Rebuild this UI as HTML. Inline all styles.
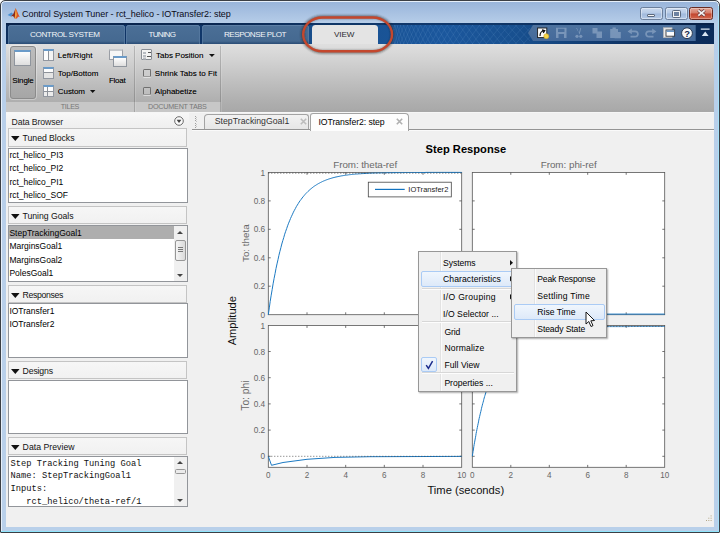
<!DOCTYPE html>
<html><head><meta charset="utf-8"><title>Control System Tuner</title>
<style>
*{box-sizing:border-box;margin:0;padding:0}
html,body{width:720px;height:533px;overflow:hidden}
body{position:relative;background:#b6cde8;font-family:"Liberation Sans",sans-serif;font-size:9px;color:#000}
.a{position:absolute}
.t{position:absolute;white-space:nowrap;line-height:1}
svg{position:absolute;overflow:visible}
</style></head><body>
<div class="a" style="left:0;top:0;width:720px;height:533px;background:#fff"></div>
<div class="a" style="left:0;top:0;width:720px;height:533px;border:1px solid #3b3f45;border-radius:5px 5px 1px 1px;background:linear-gradient(#98b4da 0,#a4bee0 9px,#b6cde8 22px,#b8cfea 60px,#b9d0ea 100%);box-shadow:inset 0 0 0 1px #e6effa"></div>
<div class="a" style="left:718px;top:6px;width:1px;height:526px;background:#a6e2fa"></div>
<div class="a" style="left:1px;top:531px;width:718px;height:1px;background:#8fe4fb"></div>
<svg style="left:7.3px;top:7px" width="13.5" height="12.5" viewBox="0 0 14 13">
<path d="M0.6 8.2 L4.6 5.6 L6.4 7.4 L3.9 10 Z" fill="#4a90d2"/>
<path d="M3.9 10 L6.4 7.4 C7.4 5.5 8 3 8.9 1.2 L9.6 4 L8.2 12 L6.2 9.4 Z" fill="#8b2b1c"/>
<path d="M8.9 1.2 C10.4 3.2 11.4 7.2 13.4 10.6 C12 10 11.2 9.8 10.4 12 L8 12 C8.5 8 8.7 4 8.9 1.2Z" fill="#d9542a"/>
<path d="M8.9 1.2 C9.7 3.4 10 5.4 10.2 8.4 L9 12 L7.9 12 C8.4 8 8.7 4 8.9 1.2Z" fill="#f4a53f"/>
</svg>
<div class="t" style="left:22.00px;top:9.80px;font-size:9.00px;color:#0a0a18;letter-spacing:-0.047px;">Control System Tuner - rct_helico - IOTransfer2: step</div>
<div class="a" style="left:640px;top:7px;width:23px;height:13px;border:1px solid #6b7f9c;border-radius:2.5px;background:linear-gradient(#cbdaee,#b6cae6 47%,#a0b9dc 53%,#b4c9e6);box-shadow:inset 0 0 0 1px rgba(255,255,255,.4)"></div>
<div class="a" style="left:665px;top:7px;width:23px;height:13px;border:1px solid #6b7f9c;border-radius:2.5px;background:linear-gradient(#cbdaee,#b6cae6 47%,#a0b9dc 53%,#b4c9e6);box-shadow:inset 0 0 0 1px rgba(255,255,255,.4)"></div>
<div class="a" style="left:689px;top:7px;width:24px;height:13px;border:1px solid #6a2b22;border-radius:2.5px;background:linear-gradient(#e2a899,#d47a66 47%,#c2452e 53%,#d2684e);box-shadow:inset 0 0 0 1px rgba(255,255,255,.3)"></div>
<div class="a" style="left:647.3px;top:13.6px;width:7.8px;height:3.4px;background:#f4f4f4;border:0.8px solid #5b697e;border-radius:1px"></div>
<div class="a" style="left:673px;top:11px;width:7px;height:5.6px;background:#6d82a1;border:1.7px solid #f4f4f4;outline:0.8px solid #5b697e;border-radius:0.5px"></div>
<svg style="left:695.5px;top:9.3px" width="11" height="8" viewBox="0 0 11 8"><path d="M2.3 1.3 L8.7 6.7 M8.7 1.3 L2.3 6.7" stroke="#6b4040" stroke-width="3.1"/><path d="M2.3 1.3 L8.7 6.7 M8.7 1.3 L2.3 6.7" stroke="#f4f4f4" stroke-width="1.7"/></svg>
<div class="a" style="left:6px;top:22.5px;width:708px;height:21.5px;background:linear-gradient(90deg,#0d2f5e 0,#10376a 30%,#18508f 45%,#1b579d 62%,#18508f 72%,#0e3364 88%,#0b2b59 100%)"></div>
<div class="a" style="left:6px;top:22.5px;width:708px;height:2px;background:rgba(4,20,50,.45)"></div>
<svg style="left:0;top:0" width="720" height="50" viewBox="0 0 720 50"><clipPath id="mc"><rect x="378" y="25" width="152" height="19"/></clipPath><path clip-path="url(#mc)" d="M389.5 25L394.5 44M389.5 44L394.5 25M390.3 25L395.8 44M390.3 44L395.8 25M392.0 25L398.0 44M392.0 44L398.0 25M394.2 25L400.7 44M394.2 44L400.7 25M396.9 25L403.9 44M396.9 44L403.9 25M400.1 25L407.6 44M400.1 44L407.6 25M403.5 25L411.5 44M403.5 44L411.5 25M407.3 25L415.8 44M407.3 44L415.8 25M411.4 25L420.4 44M411.4 44L420.4 25M415.8 25L425.3 44M415.8 44L425.3 25M420.4 25L430.4 44M420.4 44L430.4 25M425.3 25L435.8 44M425.3 44L435.8 25M430.4 25L441.4 44M430.4 44L441.4 25M435.7 25L447.2 44M435.7 44L447.2 25M441.3 25L453.3 44M441.3 44L453.3 25M447.1 25L459.6 44M447.1 44L459.6 25M453.1 25L466.1 44M453.1 44L466.1 25M459.3 25L472.8 44M459.3 44L472.8 25M465.6 25L479.6 44M465.6 44L479.6 25M472.2 25L486.7 44M472.2 44L486.7 25M479.0 25L494.0 44M479.0 44L494.0 25M485.9 25L501.4 44M485.9 44L501.4 25M493.0 25L509.0 44M493.0 44L509.0 25M500.2 25L516.7 44M500.2 44L516.7 25M507.7 25L524.7 44M507.7 44L524.7 25M515.3 25L532.8 44M515.3 44L532.8 25M523.0 25L541.0 44M523.0 44L541.0 25" fill="none" stroke="#7ba5d8" stroke-width="0.5" opacity=".3"/></svg>
<svg style="left:528px;top:24.8px" width="168" height="16" viewBox="0 0 168 16"><defs><linearGradient id="qg" x1="0" y1="0" x2="0" y2="1"><stop offset="0" stop-color="#4d729e"/><stop offset="1" stop-color="#44699a"/></linearGradient></defs><path d="M0 8 L5 0 H167.7 V16 H5 Z" fill="url(#qg)"/></svg>
<svg style="left:528px;top:24px" width="186" height="18" viewBox="528 24 186 18">
<rect x="537.6" y="28" width="9.2" height="9.6" fill="#fbfbfb" stroke="#1a1a1a" stroke-width="0.9"/>
<path d="M540 36 C540 32.5 541.5 31 544 31 M542 29.8 L544.8 30.6 L543.2 33" fill="none" stroke="#111" stroke-width="1.2"/>
<circle cx="546.3" cy="36.2" r="2.5" fill="#f7d64a" stroke="#c9a227" stroke-width="0.6"/>
<g fill="#a9bdd6" opacity=".5">
 <path d="M556 27.8 H566.5 V38 H556 Z M558 28.8 V32 H564.5 V28.8 Z M558.5 34 V38 H564 V34 Z" fill-rule="evenodd"/>
 <path d="M576.2 28 L579.6 34.5 L581.2 28 L580.4 28 L578.9 33 L577 28 Z"/>
 <circle cx="577" cy="36.3" r="1.6"/><circle cx="580.8" cy="36.3" r="1.6"/>
 <path d="M592.5 28 H597.5 V33.5 H592.5 Z M596.5 31.5 H602 V38 H596.5 Z"/>
 <path d="M610.2 29 H618 V38 H610.2 Z M612.5 27.6 H615.8 V29.6 H612.5 Z M614.5 32 H620.8 V38.2 H614.5 Z"/>
 <path d="M627.6 31.5 L631.8 28.6 V30.4 H635 C637.6 30.4 638.8 32 638.8 34 C638.8 36 637.6 37.4 635 37.4 H630.5 V35.8 H635 C636.4 35.8 637 35 637 34 C637 33 636.4 32.2 635 32.2 H631.8 V34.2 Z"/>
 <path d="M656.4 31.5 L652.2 28.6 V30.4 H649 C646.4 30.4 645.2 32 645.2 34 C645.2 36 646.4 37.4 649 37.4 H653.5 V35.8 H649 C647.6 35.8 647 35 647 34 C647 33 647.6 32.2 649 32.2 H652.2 V34.2 Z"/>
</g>
<rect x="663.6" y="27.8" width="8.4" height="9.6" fill="#e9e9e9" stroke="#b9b9b9" stroke-width="0.8"/>
<rect x="666" y="30" width="8.6" height="6.2" fill="#fdfdfd" stroke="#33373d" stroke-width="0.9"/>
<rect x="666.4" y="30.4" width="7.8" height="1.5" fill="#5d8ec2"/>
<circle cx="687" cy="33.2" r="5.4" fill="#f8f8f8" stroke="#2a3a52" stroke-width="1"/>
<text x="687" y="36.6" font-family="Liberation Sans, sans-serif" font-weight="bold" font-size="9.4" fill="#14284e" text-anchor="middle">?</text>
<path d="M700.8 28.4 H709.6 V29.7 H700.8 Z M701.8 36 L705.2 31.6 L708.6 36 Z" fill="#d9e5f2"/>
</svg>
<div class="a" style="left:8px;top:25px;width:116.6px;height:18.8px;border-radius:3.5px 3.5px 0 0;background:linear-gradient(#4b6f97 0,#456990 85%,#2e517a 96%);box-shadow:inset 0 0.8px 0 #6485aa,inset 0.8px 0 0 #587ba2,inset -0.8px 0 0 #587ba2"></div>
<div class="a" style="left:126.3px;top:25px;width:74px;height:18.8px;border-radius:3.5px 3.5px 0 0;background:linear-gradient(#4b6f97 0,#456990 85%,#2e517a 96%);box-shadow:inset 0 0.8px 0 #6485aa,inset 0.8px 0 0 #587ba2,inset -0.8px 0 0 #587ba2"></div>
<div class="a" style="left:202.3px;top:25px;width:107px;height:18.8px;border-radius:3.5px 3.5px 0 0;background:linear-gradient(#4b6f97 0,#456990 85%,#2e517a 96%);box-shadow:inset 0 0.8px 0 #6485aa,inset 0.8px 0 0 #587ba2,inset -0.8px 0 0 #587ba2"></div>
<div class="a" style="left:312px;top:25px;width:65.8px;height:19px;border-radius:3.5px 3.5px 0 0;background:#e4e4e4"></div>
<div class="t" style="left:30.00px;top:30.95px;font-size:8.10px;color:#f2f5f8;letter-spacing:-0.374px;">CONTROL SYSTEM</div>
<div class="t" style="left:148.50px;top:30.95px;font-size:8.10px;color:#f2f5f8;letter-spacing:-0.710px;">TUNING</div>
<div class="t" style="left:224.00px;top:30.95px;font-size:8.10px;color:#f2f5f8;letter-spacing:-0.493px;">RESPONSE PLOT</div>
<div class="t" style="left:334.00px;top:30.95px;font-size:8.10px;color:#2a2a30;letter-spacing:-0.067px;">VIEW</div>
<div class="a" style="left:6px;top:44px;width:708px;height:69px;background:linear-gradient(#dfdfdf 0,#d3d3d3 22%,#bfbfbf 55%,#aeaeae 85%,#a7a7a7 100%)"></div>
<div class="a" style="left:6px;top:102px;width:214.5px;height:10.5px;background:#c7c7c7"></div>
<div class="a" style="left:6px;top:112.3px;width:708px;height:1px;background:#f6f6f6"></div>
<div class="a" style="left:134px;top:46px;width:1px;height:66px;background:rgba(0,0,0,.17);box-shadow:1px 0 0 rgba(255,255,255,.14)"></div>
<div class="a" style="left:220px;top:46px;width:1px;height:66px;background:rgba(0,0,0,.17);box-shadow:1px 0 0 rgba(255,255,255,.14)"></div>
<div class="t" style="left:60.80px;top:103.40px;font-size:7.20px;color:#777;letter-spacing:-0.352px;">TILES</div>
<div class="t" style="left:148.00px;top:103.40px;font-size:7.20px;color:#777;letter-spacing:-0.218px;">DOCUMENT TABS</div>
<div class="a" style="left:10px;top:46.3px;width:25.6px;height:53px;border:1px solid #8b8b8b;border-radius:3px;background:linear-gradient(#bdbdbd,#a6a6a6);box-shadow:0 0 0 1px rgba(255,255,255,.3)"></div>
<div class="a" style="left:13.5px;top:50px;width:17.2px;height:15.8px;border:1px solid #8f959d;border-top:2px solid #6a9bc9;background:linear-gradient(#fefefe,#dedede)"></div>
<div class="t" style="left:12.30px;top:76.80px;font-size:8.00px;color:#000;letter-spacing:-0.148px;text-shadow:0 0 0.4px rgba(0,0,0,.35);">Single</div>
<div class="a" style="left:43px;top:49px;width:11px;height:12px;border:1px solid #9297a0;border-top:2px solid #6a9bc9;background:linear-gradient(90deg,#fdfdfd 4px,#8d9299 4px,#8d9299 5px,#f4f4f4 5px)"></div>
<div class="a" style="left:43px;top:67px;width:11px;height:12px;border:1px solid #9297a0;border-top:2px solid #6a9bc9;background:linear-gradient(#fdfdfd 3.5px,#8d9299 3.5px,#8d9299 4.5px,#e4e4e4 4.5px)"></div>
<div class="a" style="left:43px;top:85px;width:11px;height:12px;border:1px solid #9297a0;border-top:2px solid #6a9bc9;background:linear-gradient(90deg,transparent 3.5px,#8d9299 3.5px,#8d9299 4.5px,transparent 4.5px),linear-gradient(#fdfdfd 3.5px,#8d9299 3.5px,#8d9299 4.5px,#ececec 4.5px)"></div>
<div class="t" style="left:57.80px;top:51.50px;font-size:8.00px;color:#000;letter-spacing:0.040px;text-shadow:0 0 0.4px rgba(0,0,0,.35);">Left/Right</div>
<div class="t" style="left:57.80px;top:69.60px;font-size:8.00px;color:#000;letter-spacing:0.015px;text-shadow:0 0 0.4px rgba(0,0,0,.35);">Top/Bottom</div>
<div class="t" style="left:57.80px;top:87.70px;font-size:8.00px;color:#000;letter-spacing:-0.073px;text-shadow:0 0 0.4px rgba(0,0,0,.35);">Custom</div>
<svg style="left:89.6px;top:90px" width="5.4" height="3" viewBox="0 0 5.4 3"><path d="M0 0H5.4L2.7 3Z" fill="#111"/></svg>
<div class="a" style="left:109px;top:49.4px;width:14px;height:11px;border:1px solid #9a9ea5;border-top:2px solid #c6c9cd;background:#f6f6f6"></div>
<div class="a" style="left:112.5px;top:55.5px;width:14px;height:11.5px;border:1px solid #8f959d;border-top:2px solid #6a9bc9;background:linear-gradient(#fefefe,#dedede)"></div>
<div class="t" style="left:108.90px;top:76.80px;font-size:8.00px;color:#000;letter-spacing:-0.221px;text-shadow:0 0 0.4px rgba(0,0,0,.35);">Float</div>
<div class="a" style="left:141.2px;top:49.4px;width:11.2px;height:10.2px;border:1px solid #8a8f96;background:#f3f3f3;border-radius:1px"></div>
<div class="a" style="left:143px;top:51.5px;width:3px;height:2px;background:#b8bcc2;box-shadow:0 3px 0 #b8bcc2,0 5.5px 0 #b8bcc2"></div>
<div class="a" style="left:147.5px;top:52px;width:3px;height:1px;background:#555;box-shadow:-1px 4px 0 #555,0 4px 0 #555"></div>
<div class="t" style="left:156.00px;top:51.50px;font-size:8.00px;color:#000;letter-spacing:-0.007px;text-shadow:0 0 0.4px rgba(0,0,0,.35);">Tabs Position</div>
<svg style="left:208.6px;top:53.6px" width="5.8" height="3.1" viewBox="0 0 5.8 3.1"><path d="M0 0H5.8L2.9 3.1Z" fill="#111"/></svg>
<div class="a" style="left:143px;top:69.4px;width:7.8px;height:7.6px;border:1px solid #6f6f6f;border-bottom-color:#9a9a9a;border-radius:1.5px;background:rgba(255,255,255,.12);box-shadow:0 1px 0 rgba(255,255,255,.5)"></div>
<div class="a" style="left:143px;top:87.3px;width:7.8px;height:7.6px;border:1px solid #6f6f6f;border-bottom-color:#9a9a9a;border-radius:1.5px;background:rgba(255,255,255,.12);box-shadow:0 1px 0 rgba(255,255,255,.5)"></div>
<div class="t" style="left:154.80px;top:69.60px;font-size:8.00px;color:#000;letter-spacing:0.032px;text-shadow:0 0 0.4px rgba(0,0,0,.35);">Shrink Tabs to Fit</div>
<div class="t" style="left:154.80px;top:87.70px;font-size:8.00px;color:#000;letter-spacing:0.019px;text-shadow:0 0 0.4px rgba(0,0,0,.35);">Alphabetize</div>
<div class="a" style="left:6px;top:113.3px;width:708px;height:413.7px;background:#f0f0f0"></div>
<div class="a" style="left:6px;top:113.3px;width:183px;height:15.5px;background:linear-gradient(#f7f7f7,#eeeeee)"></div>
<div class="t" style="left:11.60px;top:118.05px;font-size:8.70px;color:#1a1a1a;letter-spacing:-0.100px;">Data Browser</div>
<svg style="left:173.5px;top:116.3px" width="10" height="10" viewBox="0 0 10 10"><circle cx="5" cy="5" r="4.3" fill="#fafafa" stroke="#5a5a5a" stroke-width="0.9"/><path d="M2.6 3.7 L7.4 3.7 L5 7Z" fill="#444"/></svg>
<div class="a" style="left:7.5px;top:128px;width:179.5px;height:19px;border:1px solid #c4c4c4;background:linear-gradient(#f6f6f6,#f1f1f1)"></div>
<svg style="left:10.5px;top:136.2px" width="8.6" height="4.9" viewBox="0 0 8.6 4.9"><path d="M0 0H8.6L4.3 4.9Z" fill="#111"/></svg>
<div class="t" style="left:22.60px;top:133.85px;font-size:8.70px;color:#111;letter-spacing:-0.035px;">Tuned Blocks</div>
<div class="a" style="left:7.5px;top:148px;width:180.3px;height:55px;border:1px solid #92959a;background:#fff"></div>
<div class="t" style="left:9.40px;top:150.75px;font-size:8.50px;color:#000;">rct_helico_PI3</div>
<div class="t" style="left:9.40px;top:164.15px;font-size:8.50px;color:#000;">rct_helico_PI2</div>
<div class="t" style="left:9.40px;top:177.55px;font-size:8.50px;color:#000;">rct_helico_PI1</div>
<div class="t" style="left:9.40px;top:190.95px;font-size:8.50px;color:#000;">rct_helico_SOF</div>
<div class="a" style="left:7.5px;top:206px;width:179.5px;height:18px;border:1px solid #c4c4c4;background:linear-gradient(#f6f6f6,#f1f1f1)"></div>
<svg style="left:10.5px;top:214.2px" width="8.6" height="4.9" viewBox="0 0 8.6 4.9"><path d="M0 0H8.6L4.3 4.9Z" fill="#111"/></svg>
<div class="t" style="left:22.60px;top:211.85px;font-size:8.70px;color:#111;letter-spacing:-0.039px;">Tuning Goals</div>
<div class="a" style="left:7.5px;top:225px;width:180.3px;height:57px;border:1px solid #92959a;background:#fff"></div>
<div class="a" style="left:8.5px;top:226px;width:165px;height:13.4px;background:#aeaeae"></div>
<div class="t" style="left:9.40px;top:228.75px;font-size:8.50px;color:#000;">StepTrackingGoal1</div>
<div class="t" style="left:9.40px;top:242.15px;font-size:8.50px;color:#000;">MarginsGoal1</div>
<div class="t" style="left:9.40px;top:255.55px;font-size:8.50px;color:#000;">MarginsGoal2</div>
<div class="t" style="left:9.40px;top:268.95px;font-size:8.50px;color:#000;">PolesGoal1</div>
<div class="a" style="left:173.8px;top:226px;width:13px;height:55px;background:#f0f0f0"></div>
<svg style="left:177.3px;top:231px" width="6" height="3" viewBox="0 0 6 3"><path d="M0 3H6L3 0Z" fill="#444"/></svg>
<svg style="left:177.3px;top:273.5px" width="6" height="3" viewBox="0 0 6 3"><path d="M0 0H6L3 3Z" fill="#444"/></svg>
<div class="a" style="left:174.8px;top:239.5px;width:11px;height:21px;border:1px solid #979797;border-radius:2px;background:linear-gradient(90deg,#f5f5f5,#dadada)"></div>
<div class="a" style="left:177.8px;top:247px;width:5px;height:1px;background:#777;box-shadow:0 2px 0 #777,0 4px 0 #777"></div>
<div class="a" style="left:7.5px;top:285px;width:179.5px;height:17.5px;border:1px solid #c4c4c4;background:linear-gradient(#f6f6f6,#f1f1f1)"></div>
<svg style="left:10.5px;top:293.2px" width="8.6" height="4.9" viewBox="0 0 8.6 4.9"><path d="M0 0H8.6L4.3 4.9Z" fill="#111"/></svg>
<div class="t" style="left:22.60px;top:290.85px;font-size:8.70px;color:#111;letter-spacing:-0.341px;">Responses</div>
<div class="a" style="left:7.5px;top:303px;width:180.3px;height:55px;border:1px solid #92959a;background:#fff"></div>
<div class="t" style="left:9.40px;top:306.75px;font-size:8.50px;color:#000;">IOTransfer1</div>
<div class="t" style="left:9.40px;top:320.05px;font-size:8.50px;color:#000;">IOTransfer2</div>
<div class="a" style="left:7.5px;top:361px;width:179.5px;height:18px;border:1px solid #c4c4c4;background:linear-gradient(#f6f6f6,#f1f1f1)"></div>
<svg style="left:10.5px;top:369.2px" width="8.6" height="4.9" viewBox="0 0 8.6 4.9"><path d="M0 0H8.6L4.3 4.9Z" fill="#111"/></svg>
<div class="t" style="left:22.60px;top:366.85px;font-size:8.70px;color:#111;letter-spacing:-0.155px;">Designs</div>
<div class="a" style="left:7.5px;top:380px;width:180.3px;height:54px;border:1px solid #92959a;background:#fff"></div>
<div class="a" style="left:7.5px;top:437px;width:179.5px;height:18px;border:1px solid #c4c4c4;background:linear-gradient(#f6f6f6,#f1f1f1)"></div>
<svg style="left:10.5px;top:445.2px" width="8.6" height="4.9" viewBox="0 0 8.6 4.9"><path d="M0 0H8.6L4.3 4.9Z" fill="#111"/></svg>
<div class="t" style="left:22.60px;top:442.85px;font-size:8.70px;color:#111;letter-spacing:0.024px;">Data Preview</div>
<div class="a" style="left:7.5px;top:456px;width:180.3px;height:51px;border:1px solid #92959a;background:#fff"></div>
<div class="t" style="left:10.60px;top:459.74px;font-size:8.72px;color:#111;font-family:'Liberation Mono',monospace;white-space:pre;">Step Tracking Tuning Goal</div>
<div class="t" style="left:10.60px;top:472.34px;font-size:8.72px;color:#111;font-family:'Liberation Mono',monospace;white-space:pre;">Name: StepTrackingGoal1</div>
<div class="t" style="left:10.60px;top:484.94px;font-size:8.72px;color:#111;font-family:'Liberation Mono',monospace;white-space:pre;">Inputs:</div>
<div class="a" style="left:8px;top:494px;width:166px;height:11.7px;overflow:hidden">
<div class="t" style="left:2.60px;top:4.24px;font-size:8.72px;color:#111;font-family:'Liberation Mono',monospace;white-space:pre;">   rct_helico/theta-ref/1</div>
</div>
<div class="a" style="left:173.8px;top:457px;width:13px;height:49px;background:#f0f0f0"></div>
<svg style="left:177.3px;top:461px" width="6" height="3" viewBox="0 0 6 3"><path d="M0 3H6L3 0Z" fill="#444"/></svg>
<svg style="left:177.3px;top:498.5px" width="6" height="3" viewBox="0 0 6 3"><path d="M0 0H6L3 3Z" fill="#444"/></svg>
<div class="a" style="left:174.8px;top:468.5px;width:11px;height:5.5px;border:1px solid #979797;border-radius:1.5px;background:#ebebeb"></div>
<div class="a" style="left:192px;top:130px;width:522px;height:1px;background:#fafafa"></div>
<div class="a" style="left:192px;top:129px;width:522px;height:1px;background:#949494"></div>
<div class="a" style="left:194.5px;top:115.5px;width:1px;height:12px;background:repeating-linear-gradient(#a0a0a0 0 1px,transparent 1px 2.2px)"></div>
<div class="a" style="left:196px;top:116.5px;width:1px;height:11px;background:repeating-linear-gradient(#c8c8c8 0 1px,transparent 1px 2.2px)"></div>
<div class="a" style="left:204px;top:114px;width:105.4px;height:15px;border:1px solid #a3a3a3;border-bottom:none;border-radius:4px 3px 0 0;background:linear-gradient(#f2f2f2,#e6e6e6)"></div>
<div class="a" style="left:309.6px;top:113.4px;width:99.6px;height:17.6px;border:1px solid #a3a3a3;border-bottom:none;border-radius:3px 4px 0 0;background:#fdfdfd"></div>
<div class="t" style="left:214.70px;top:117.35px;font-size:8.70px;color:#333;letter-spacing:0.034px;">StepTrackingGoal1</div>
<div class="t" style="left:318.50px;top:117.55px;font-size:8.70px;color:#000;letter-spacing:-0.067px;">IOTransfer2: step</div>
<svg style="left:299.6px;top:118.3px" width="7" height="7" viewBox="0 0 7 7"><path d="M0.8 0.8L6.2 6.2M6.2 0.8L0.8 6.2" stroke="#bcbcbc" stroke-width="1.6"/></svg>
<svg style="left:396.2px;top:118.3px" width="7" height="7" viewBox="0 0 7 7"><path d="M0.8 0.8L6.2 6.2M6.2 0.8L0.8 6.2" stroke="#b0b0b0" stroke-width="1.6"/></svg>
<div class="t" style="left:425.60px;top:144.05px;font-size:11.10px;color:#000;letter-spacing:0.026px;font-weight:bold;">Step Response</div>
<div class="t" style="left:333.30px;top:160.10px;font-size:9.80px;color:#6a6a6a;letter-spacing:-0.065px;">From: theta-ref</div>
<svg style="left:0;top:0" width="720" height="533" viewBox="0 0 720 533" font-family="Liberation Sans, sans-serif">
<g fill="#fff" stroke="#565656" stroke-width="0.8">
<rect x="268.3" y="172.4" width="193.4" height="142.3"/>
<rect x="268.3" y="325.5" width="193.4" height="141.8"/>
<rect x="472.3" y="172.4" width="192.4" height="142.3"/>
<rect x="472.3" y="325.5" width="192.4" height="141.8"/>
</g>
<path d="M307.0 314.7v-2.4M307.0 172.4v2.4M345.7 314.7v-2.4M345.7 172.4v2.4M384.3 314.7v-2.4M384.3 172.4v2.4M423.0 314.7v-2.4M423.0 172.4v2.4M268.3 286.2h2.4M461.7 286.2h-2.4M268.3 257.8h2.4M461.7 257.8h-2.4M268.3 229.3h2.4M461.7 229.3h-2.4M268.3 200.9h2.4M461.7 200.9h-2.4M307.0 467.3v-2.4M307.0 325.5v2.4M345.7 467.3v-2.4M345.7 325.5v2.4M384.3 467.3v-2.4M384.3 325.5v2.4M423.0 467.3v-2.4M423.0 325.5v2.4M268.3 456.3h2.4M461.7 456.3h-2.4M268.3 430.1h2.4M461.7 430.1h-2.4M268.3 403.9h2.4M461.7 403.9h-2.4M268.3 377.7h2.4M461.7 377.7h-2.4M268.3 351.5h2.4M461.7 351.5h-2.4M510.8 314.7v-2.4M510.8 172.4v2.4M549.3 314.7v-2.4M549.3 172.4v2.4M587.7 314.7v-2.4M587.7 172.4v2.4M626.2 314.7v-2.4M626.2 172.4v2.4M472.3 286.2h2.4M664.7 286.2h-2.4M472.3 257.8h2.4M664.7 257.8h-2.4M472.3 229.3h2.4M664.7 229.3h-2.4M472.3 200.9h2.4M664.7 200.9h-2.4M510.8 467.3v-2.4M510.8 325.5v2.4M549.3 467.3v-2.4M549.3 325.5v2.4M587.7 467.3v-2.4M587.7 325.5v2.4M626.2 467.3v-2.4M626.2 325.5v2.4M472.3 456.3h2.4M664.7 456.3h-2.4M472.3 430.1h2.4M664.7 430.1h-2.4M472.3 403.9h2.4M664.7 403.9h-2.4M472.3 377.7h2.4M664.7 377.7h-2.4M472.3 351.5h2.4M664.7 351.5h-2.4" fill="none" stroke="#505050" stroke-width="0.8"/>
<path d="M268.3 314.7L269.3 307.9L270.2 301.4L271.2 295.2L272.2 289.4L273.1 283.8L274.1 278.4L275.1 273.4L276.0 268.5L277.0 263.9L278.0 259.6L278.9 255.4L279.9 251.4L280.9 247.6L281.8 244.0L282.8 240.6L283.8 237.4L284.7 234.2L285.7 231.3L286.7 228.5L287.6 225.8L288.6 223.2L289.6 220.8L290.5 218.5L291.5 216.3L292.5 214.2L293.4 212.2L294.4 210.3L295.4 208.5L296.3 206.7L297.3 205.1L298.3 203.5L299.2 202.0L300.2 200.6L301.2 199.3L302.1 198.0L303.1 196.8L304.1 195.6L305.0 194.5L306.0 193.4L307.0 192.4L307.9 191.5L308.9 190.6L309.9 189.7L310.8 188.9L311.8 188.1L312.8 187.3L313.7 186.6L314.7 185.9L315.7 185.3L316.6 184.7L317.6 184.1L318.6 183.5L319.6 183.0L320.5 182.5L321.5 182.0L322.5 181.5L323.4 181.1L324.4 180.7L325.4 180.3L326.3 179.9L327.3 179.6L328.3 179.2L329.2 178.9L330.2 178.6L331.2 178.3L332.1 178.0L333.1 177.7L334.1 177.5L335.0 177.2L336.0 177.0L337.0 176.8L337.9 176.6L338.9 176.4L339.9 176.2L340.8 176.0L341.8 175.8L342.8 175.7L343.7 175.5L344.7 175.4L345.7 175.2L346.6 175.1L347.6 175.0L348.6 174.8L349.5 174.7L350.5 174.6L351.5 174.5L352.4 174.4L353.4 174.3L354.4 174.2L355.3 174.1L356.3 174.0L357.3 174.0L358.2 173.9L359.2 173.8L360.2 173.8L361.1 173.7L362.1 173.6L363.1 173.6L364.0 173.5L365.0 173.5L366.0 173.4L366.9 173.4L367.9 173.3L368.9 173.3L369.8 173.2L370.8 173.2L371.8 173.2L372.7 173.1L373.7 173.1L374.7 173.0L375.6 173.0L376.6 173.0L377.6 173.0L378.5 172.9L379.5 172.9L380.5 172.9L381.4 172.9L382.4 172.8L383.4 172.8L384.3 172.8L385.3 172.8L386.3 172.8L387.2 172.7L388.2 172.7L389.2 172.7L390.1 172.7L391.1 172.7L392.1 172.7L393.0 172.7L394.0 172.6L395.0 172.6L395.9 172.6L396.9 172.6L397.9 172.6L398.8 172.6L399.8 172.6L400.8 172.6L401.7 172.6L402.7 172.6L403.7 172.5L404.6 172.5L405.6 172.5L406.6 172.5L407.5 172.5L408.5 172.5L409.5 172.5L410.4 172.5L411.4 172.5L412.4 172.5L413.3 172.5L414.3 172.5L415.3 172.5L416.3 172.5L417.2 172.5L418.2 172.5L419.2 172.5L420.1 172.5L421.1 172.5L422.1 172.5L423.0 172.5L424.0 172.5L425.0 172.5L425.9 172.4L426.9 172.4L427.9 172.4L428.8 172.4L429.8 172.4L430.8 172.4L431.7 172.4L432.7 172.4L433.7 172.4L434.6 172.4L435.6 172.4L436.6 172.4L437.5 172.4L438.5 172.4L439.5 172.4L440.4 172.4L441.4 172.4L442.4 172.4L443.3 172.4L444.3 172.4L445.3 172.4L446.2 172.4L447.2 172.4L448.2 172.4L449.1 172.4L450.1 172.4L451.1 172.4L452.0 172.4L453.0 172.4L454.0 172.4L454.9 172.4L455.9 172.4L456.9 172.4L457.8 172.4L458.8 172.4L459.8 172.4L460.7 172.4L461.7 172.4" fill="none" stroke="#1c7ac3" stroke-width="1"/>
<path d="M268.3 173.2H461.7" stroke="#444" stroke-width="0.8" stroke-dasharray="1 2" fill="none"/>
<path d="M268.3 456.3L271.5 465.3L283.0 462.5L307.0 459.3L335.0 457.4L370.0 456.7L461.7 456.4" fill="none" stroke="#1c7ac3" stroke-width="1"/>
<path d="M268.3 456.3H461.7" stroke="#444" stroke-width="0.8" stroke-dasharray="1 2" fill="none"/>
<path d="M472.3 314.1H664.7" stroke="#1c7ac3" stroke-width="1" fill="none"/>
<path d="M472.3 456.3L472.7 453.8L473.1 451.4L473.5 449.0L473.8 446.7L474.2 444.4L474.6 442.2L475.0 440.0L475.4 437.8L475.8 435.7L476.1 433.6L476.5 431.6L476.9 429.6L477.3 427.6L477.7 425.7L478.1 423.8L478.5 421.9L478.8 420.1L479.2 418.3L479.6 416.6L480.0 414.9L480.4 413.2L480.8 411.5L481.2 409.9L481.5 408.3L481.9 406.8L482.3 405.2L482.7 403.7L483.1 402.3L483.5 400.8L483.8 399.4L484.2 398.0L484.6 396.6L485.0 395.3L485.4 394.0L485.8 392.7L486.2 391.5L486.5 390.2L486.9 389.0L487.3 387.8L487.7 386.6L488.1 385.5L488.5 384.4L488.8 383.3L489.2 382.2L489.6 381.1L490.0 380.1L490.4 379.1L490.8 378.1L491.2 377.1L491.5 376.1L491.9 375.2L492.3 374.3L492.7 373.3L493.1 372.4L493.5 371.6L493.8 370.7L494.2 369.9L494.6 369.0L495.0 368.2L495.4 367.4L495.8 366.7L496.2 365.9L496.5 365.1L496.9 364.4L497.3 363.7L497.7 363.0L498.1 362.3L498.5 361.6L498.9 360.9L499.2 360.3L499.6 359.6L500.0 359.0L500.4 358.4L500.8 357.8L501.2 357.2L501.5 356.6L501.9 356.0L502.3 355.5L502.7 354.9L503.1 354.4L503.5 353.8L503.9 353.3L504.2 352.8L504.6 352.3L505.0 351.8L505.4 351.3L505.8 350.9L506.2 350.4L506.5 349.9L506.9 349.5L507.3 349.1L507.7 348.6L508.1 348.2L508.5 347.8L508.9 347.4L509.2 347.0L509.6 346.6L510.0 346.2L510.4 345.8L510.8 345.5L511.2 345.1L511.5 344.8L511.9 344.4L512.3 344.1L512.7 343.7L513.1 343.4L513.5 343.1L513.9 342.8L514.2 342.5L514.6 342.2L515.0 341.9L515.4 341.6M606.2 326.7L606.6 326.7L607.0 326.7L607.4 326.7L607.7 326.6L608.1 326.6L608.5 326.6L608.9 326.6L609.3 326.6L609.7 326.6L610.1 326.6L610.4 326.6L610.8 326.6L611.2 326.6L611.6 326.6L612.0 326.6L612.4 326.6L612.8 326.6L613.1 326.6L613.5 326.6L613.9 326.6L614.3 326.6L614.7 326.6L615.1 326.6L615.4 326.6L615.8 326.6L616.2 326.6L616.6 326.6L617.0 326.6L617.4 326.6L617.8 326.6L618.1 326.6L618.5 326.6L618.9 326.6L619.3 326.6L619.7 326.6L620.1 326.6L620.4 326.6L620.8 326.6L621.2 326.6L621.6 326.6L622.0 326.6L622.4 326.6L622.8 326.6L623.1 326.6L623.5 326.6L623.9 326.6L624.3 326.6L624.7 326.6L625.1 326.6L625.5 326.6L625.8 326.6L626.2 326.6L626.6 326.6L627.0 326.6L627.4 326.6L627.8 326.6L628.1 326.6L628.5 326.6L628.9 326.6L629.3 326.6L629.7 326.5L630.1 326.5L630.5 326.5L630.8 326.5L631.2 326.5L631.6 326.5L632.0 326.5L632.4 326.5L632.8 326.5L633.1 326.5L633.5 326.5L633.9 326.5L634.3 326.5L634.7 326.5L635.1 326.5L635.5 326.5L635.8 326.5L636.2 326.5L636.6 326.5L637.0 326.5L637.4 326.5L637.8 326.5L638.1 326.5L638.5 326.5L638.9 326.5L639.3 326.5L639.7 326.5L640.1 326.5L640.5 326.5L640.8 326.5L641.2 326.5L641.6 326.5L642.0 326.5L642.4 326.5L642.8 326.5L643.2 326.5L643.5 326.5L643.9 326.5L644.3 326.5L644.7 326.5L645.1 326.5L645.5 326.5L645.8 326.5L646.2 326.5L646.6 326.5L647.0 326.5L647.4 326.5L647.8 326.5L648.2 326.5L648.5 326.5L648.9 326.5L649.3 326.5L649.7 326.5L650.1 326.5L650.5 326.5L650.8 326.5L651.2 326.5L651.6 326.5L652.0 326.5L652.4 326.5L652.8 326.5L653.2 326.5L653.5 326.5L653.9 326.5L654.3 326.5L654.7 326.5L655.1 326.5L655.5 326.5L655.8 326.5L656.2 326.5L656.6 326.5L657.0 326.5L657.4 326.5L657.8 326.5L658.2 326.5L658.5 326.5L658.9 326.5L659.3 326.5L659.7 326.5L660.1 326.5L660.5 326.5L660.9 326.5L661.2 326.5L661.6 326.5L662.0 326.5L662.4 326.5L662.8 326.5L663.2 326.5L663.5 326.5L663.9 326.5L664.3 326.5L664.7 326.5" fill="none" stroke="#1c7ac3" stroke-width="1"/>
<path d="M472.3 326.3H664.7" stroke="#444" stroke-width="0.8" stroke-dasharray="1 2" fill="none"/>
<g font-size="9.2" fill="#666" text-anchor="end">
<text transform="translate(265.2,317.8) scale(0.9,1)">0</text>
<text transform="translate(265.2,289.3) scale(0.9,1)">0.2</text>
<text transform="translate(265.2,260.9) scale(0.9,1)">0.4</text>
<text transform="translate(265.2,232.4) scale(0.9,1)">0.6</text>
<text transform="translate(265.2,204.0) scale(0.9,1)">0.8</text>
<text transform="translate(265.2,175.5) scale(0.9,1)">1</text>
<text transform="translate(265.2,459.4) scale(0.9,1)">0</text>
<text transform="translate(265.2,433.2) scale(0.9,1)">0.2</text>
<text transform="translate(265.2,407.0) scale(0.9,1)">0.4</text>
<text transform="translate(265.2,380.8) scale(0.9,1)">0.6</text>
<text transform="translate(265.2,354.6) scale(0.9,1)">0.8</text>
<text transform="translate(265.2,328.6) scale(0.9,1)">1</text>
</g><g font-size="9.2" fill="#666" text-anchor="middle">
<text transform="translate(268.3,478) scale(0.88,1)">0</text>
<text transform="translate(307.0,478) scale(0.88,1)">2</text>
<text transform="translate(345.7,478) scale(0.88,1)">4</text>
<text transform="translate(384.3,478) scale(0.88,1)">6</text>
<text transform="translate(423.0,478) scale(0.88,1)">8</text>
<text transform="translate(461.7,478) scale(0.88,1)">10</text>
<text transform="translate(472.3,478) scale(0.88,1)">0</text>
<text transform="translate(510.8,478) scale(0.88,1)">2</text>
<text transform="translate(549.3,478) scale(0.88,1)">4</text>
<text transform="translate(587.7,478) scale(0.88,1)">6</text>
<text transform="translate(626.2,478) scale(0.88,1)">8</text>
<text transform="translate(664.7,478) scale(0.88,1)">10</text>
</g>
<text x="465.8" y="494" font-size="11.2" fill="#111" text-anchor="middle">Time (seconds)</text>
<text transform="translate(236.3,320.7) rotate(-90)" font-size="11.1" fill="#111" text-anchor="middle">Amplitude</text>
<text transform="translate(249,243.2) rotate(-90)" font-size="9.8" fill="#6a6a6a" text-anchor="middle">To: theta</text>
<text transform="translate(248.6,395.6) rotate(-90)" font-size="10.3" fill="#6a6a6a" text-anchor="middle">To: phi</text>
<text x="568.7" y="167.8" font-size="9.8" fill="#6a6a6a" text-anchor="middle">From: phi-ref</text>
<rect x="368.3" y="182.2" width="83" height="14.7" fill="#fff" stroke="#454545" stroke-width="0.8"/>
<path d="M375 189.4H404.7" stroke="#1173c0" stroke-width="1.2"/>
<text x="408.3" y="191.6" font-size="7.5" fill="#222" textLength="40" lengthAdjust="spacing">IOTransfer2</text>
</svg>
<div class="a" style="left:418px;top:251px;width:99px;height:141px;background:#f0f0f0;border:1px solid #979797;box-shadow:1px 1px 1.5px rgba(0,0,0,.32)"></div>
<div class="a" style="left:440px;top:252px;width:1px;height:139px;background:#e2e2e2;box-shadow:1px 0 0 #fbfbfb"></div>
<div class="a" style="left:421px;top:271px;width:94px;height:16px;border:1px solid #aacbf5;border-radius:2px;background:linear-gradient(#f0f6fd,#dde9f9)"></div>
<div class="a" style="left:421px;top:357px;width:16px;height:15px;border:1px solid #aacbf5;border-radius:2px;background:linear-gradient(#f0f6fd,#dde9f9)"></div>
<div class="t" style="left:443.10px;top:258.50px;font-size:8.60px;color:#000;letter-spacing:-0.079px;">Systems</div>
<div class="t" style="left:443.10px;top:274.90px;font-size:8.60px;color:#000;letter-spacing:0.066px;">Characteristics</div>
<div class="t" style="left:443.10px;top:292.70px;font-size:8.60px;color:#000;letter-spacing:0.297px;">I/O Grouping</div>
<div class="t" style="left:443.10px;top:309.50px;font-size:8.60px;color:#000;letter-spacing:0.042px;">I/O Selector ...</div>
<div class="t" style="left:444.40px;top:327.60px;font-size:8.60px;color:#000;letter-spacing:-0.082px;">Grid</div>
<div class="t" style="left:444.40px;top:344.10px;font-size:8.60px;color:#000;letter-spacing:0.161px;">Normalize</div>
<div class="t" style="left:444.40px;top:360.60px;font-size:8.60px;color:#000;letter-spacing:0.058px;">Full View</div>
<div class="t" style="left:444.40px;top:379.00px;font-size:8.60px;color:#000;letter-spacing:-0.020px;">Properties ...</div>
<div class="a" style="left:421.5px;top:288px;width:92px;height:1px;background:#d7d7d7;box-shadow:0 1px 0 #fdfdfd"></div>
<div class="a" style="left:421.5px;top:321px;width:92px;height:1px;background:#d7d7d7;box-shadow:0 1px 0 #fdfdfd"></div>
<div class="a" style="left:421.5px;top:372px;width:92px;height:1px;background:#d7d7d7;box-shadow:0 1px 0 #fdfdfd"></div>
<svg style="left:509.5px;top:259.5px" width="3" height="5.5" viewBox="0 0 3 5.5"><path d="M0 0V5.5L3 2.75Z" fill="#111"/></svg>
<svg style="left:509.5px;top:276px" width="3" height="5.5" viewBox="0 0 3 5.5"><path d="M0 0V5.5L3 2.75Z" fill="#111"/></svg>
<svg style="left:509.5px;top:294px" width="3" height="5.5" viewBox="0 0 3 5.5"><path d="M0 0V5.5L3 2.75Z" fill="#111"/></svg>
<svg style="left:424.5px;top:359.5px" width="9" height="10" viewBox="0 0 9 10"><path d="M1.2 5.2 L3.4 8.4 L7.6 1.2" fill="none" stroke="#1c2c8c" stroke-width="1.5"/></svg>
<div class="a" style="left:511px;top:268px;width:96px;height:70px;background:#f0f0f0;border:1px solid #979797;box-shadow:1px 1px 1.5px rgba(0,0,0,.32)"></div>
<div class="a" style="left:534px;top:269px;width:1px;height:68px;background:#e2e2e2;box-shadow:1px 0 0 #fbfbfb"></div>
<div class="a" style="left:514px;top:304px;width:91px;height:16px;border:1px solid #aacbf5;border-radius:2px;background:linear-gradient(#f0f6fd,#dde9f9)"></div>
<div class="t" style="left:537.30px;top:275.00px;font-size:8.60px;color:#000;letter-spacing:-0.202px;">Peak Response</div>
<div class="t" style="left:537.30px;top:291.50px;font-size:8.60px;color:#000;letter-spacing:0.232px;">Settling Time</div>
<div class="t" style="left:537.30px;top:308.00px;font-size:8.60px;color:#000;letter-spacing:0.009px;">Rise Time</div>
<div class="t" style="left:537.30px;top:324.50px;font-size:8.60px;color:#000;letter-spacing:-0.113px;">Steady State</div>
<svg style="left:585px;top:311px" width="12" height="18" viewBox="0 0 12 18"><path d="M1 1 L1 13 L3.8 10.5 L6 15.5 L8 14.6 L5.8 9.8 L9.5 9.5 Z" fill="#fff" stroke="#000" stroke-width="0.9"/></svg>
<svg style="left:296px;top:10px" width="104" height="50" viewBox="296 10 104 50"><defs><filter id="sh" x="-10%" y="-20%" width="120%" height="140%"><feGaussianBlur stdDeviation="0.9"/></filter></defs><rect x="302.6" y="16.9" width="90" height="35" rx="20" ry="17.5" fill="none" stroke="#2a2a2a" stroke-opacity=".55" stroke-width="3.4" filter="url(#sh)"/><rect x="303.2" y="17.5" width="88.8" height="33.8" rx="19.5" ry="16.9" fill="none" stroke="#c4472d" stroke-width="2.4"/></svg>
<div class="a" style="left:705.5px;top:520px;width:1px;height:1px;background:#b3a787;box-shadow:2.3px -2.3px 0 #b3a787,2.3px 0 0 #b3a787,4.6px -4.6px 0 #b3a787,4.6px -2.3px 0 #b3a787,4.6px 0 0 #b3a787"></div>
</body></html>
